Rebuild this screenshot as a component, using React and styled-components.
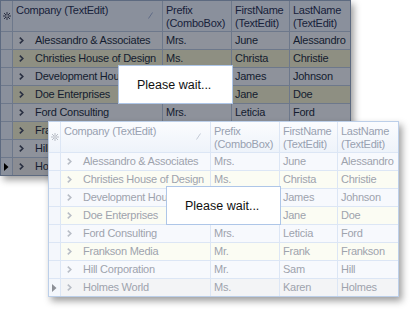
import React from "react";
import styled, { createGlobalStyle, css } from "styled-components";

const Global = createGlobalStyle`
  html, body { margin: 0; padding: 0; background: #ffffff; }
  * { box-sizing: border-box; }
`;

const themes = {
  dim: {
    header: "#8a909c",
    rowA: "#8e929b",
    rowB: "#8e8f82",
    focus: "#8b8d93",
    indicator: "#8a909c",
    line: "#6d788b",
    border: "#5d6a80",
    text: "#141c2f",
    headText: "#17213a",
    glyph: "#2a3042",
    sort: "#5f6b86",
    focusMark: "#000000",
  },
  light: {
    header: "linear-gradient(#fbfcfe, #eef3fa)",
    rowA: "#f7f9fd",
    rowB: "#fbfcf3",
    focus: "#f3f4f6",
    indicator: "#f4f7fc",
    line: "#dce6f5",
    border: "#bccfe9",
    text: "#9ea3ad",
    headText: "#98a1b1",
    glyph: "#b8bdc6",
    sort: "#c3cad6",
    focusMark: "#8d9097",
  },
};

const Page = styled.div`
  position: relative;
  width: 411px;
  height: 310px;
  overflow: hidden;
  background: #ffffff;
  font-family: "Liberation Sans", Arial, sans-serif;
`;

const GridBox = styled.div`
  position: relative;
  display: grid;
  grid-template-columns: 12px 150px 69px 58px 60px;
  width: 351px;
  border: 1px solid ${(p) => themes[p.$v].border};
  box-shadow: 3px 4px 7px rgba(0, 0, 0, 0.38);
  font-size: 11px;
  letter-spacing: -0.25px;
`;

const Floating = styled.div`
  position: absolute;
  left: 48px;
  top: 121px;
`;

const HeadCell = styled.div`
  height: 31px;
  background: ${(p) => themes[p.$v].header};
  color: ${(p) => themes[p.$v].headText};
  border-bottom: 1px solid ${(p) => themes[p.$v].line};
  border-right: ${(p) => (p.$end ? "none" : `1px solid ${themes[p.$v].line}`)};
  padding: 3px 0 0 3px;
  line-height: 13px;
  white-space: nowrap;
  overflow: hidden;
  display: flex;
  justify-content: space-between;
  align-items: flex-start;
  ${(p) =>
    p.$corner &&
    css`
      padding: 0;
      justify-content: center;
      align-items: center;
    `}
`;

const SortMark = styled.svg`
  margin: 8px 9px 0 0;
  flex: none;
`;

const Cell = styled.div`
  height: ${(p) => (p.$lastRow ? "17px" : "18px")};
  background: ${(p) => p.$bg};
  color: ${(p) => themes[p.$v].text};
  border-bottom: ${(p) => (p.$lastRow ? "none" : `1px solid ${themes[p.$v].line}`)};
  border-right: ${(p) => (p.$end ? "none" : `1px solid ${themes[p.$v].line}`)};
  padding-left: 3px;
  line-height: 17px;
  white-space: nowrap;
  overflow: hidden;
`;

const CompanyCell = styled(Cell)`
  display: flex;
  align-items: center;
  padding-left: 6px;
`;

const Chevron = styled.svg`
  flex: none;
  margin-right: 11px;
`;

const IndicatorCell = styled(Cell)`
  background: ${(p) => themes[p.$v].indicator};
  padding: 0 0 0 3px;
  display: flex;
  align-items: center;
`;

const Panel = styled.div`
  position: absolute;
  left: 117px;
  top: 64px;
  width: 115px;
  height: 39px;
  background: #ffffff;
  border: 1px solid #aec6e8;
  display: flex;
  align-items: center;
  padding-left: 18px;
  font-size: 12.5px;
  letter-spacing: 0;
  color: #111111;
`;

const rows = [
  ["Alessandro & Associates", "Mrs.", "June", "Alessandro"],
  ["Christies House of Design", "Ms.", "Christa", "Christie"],
  ["Development House", "Mr.", "James", "Johnson"],
  ["Doe Enterprises", "Ms.", "Jane", "Doe"],
  ["Ford Consulting", "Mrs.", "Leticia", "Ford"],
  ["Frankson Media", "Mr.", "Frank", "Frankson"],
  ["Hill Corporation", "Mr.", "Sam", "Hill"],
  ["Holmes World", "Ms.", "Karen", "Holmes"],
];

function Star({ color }) {
  return (
    <svg width="8" height="8" viewBox="0 0 8 8">
      <g stroke={color} strokeWidth="1" fill="none">
        <line x1="4" y1="0" x2="4" y2="8" />
        <line x1="0" y1="4" x2="8" y2="4" />
        <line x1="1" y1="1" x2="7" y2="7" />
        <line x1="7" y1="1" x2="1" y2="7" />
      </g>
      <rect x="3" y="3" width="2" height="2" fill="#ffffff" opacity="0.35" />
    </svg>
  );
}

function Grid({ v }) {
  const t = themes[v];
  const focusIndex = rows.length - 1;
  return (
    <GridBox $v={v}>
      <HeadCell $v={v} $corner>
        <Star color={t.glyph} />
      </HeadCell>
      <HeadCell $v={v}>
        <span>Company (TextEdit)</span>
        <SortMark width="5" height="7" viewBox="0 0 5 7">
          <line x1="0.5" y1="6.5" x2="4.5" y2="0.5" stroke={t.sort} strokeWidth="1" />
        </SortMark>
      </HeadCell>
      <HeadCell $v={v}>
        <span>
          Prefix
          <br />
          (ComboBox)
        </span>
      </HeadCell>
      <HeadCell $v={v}>
        <span>
          FirstName
          <br />
          (TextEdit)
        </span>
      </HeadCell>
      <HeadCell $v={v} $end>
        <span>
          LastName
          <br />
          (TextEdit)
        </span>
      </HeadCell>
      {rows.map((r, i) => {
        const bg = i === focusIndex ? t.focus : i % 2 === 0 ? t.rowA : t.rowB;
        const last = i === rows.length - 1;
        return (
          <React.Fragment key={r[0]}>
            <IndicatorCell $v={v} $bg={bg} $lastRow={last}>
              {i === focusIndex && (
                <svg width="5" height="8" viewBox="0 0 5 8">
                  <path d="M0 0 L4.5 4 L0 8 Z" fill={t.focusMark} />
                </svg>
              )}
            </IndicatorCell>
            <CompanyCell $v={v} $bg={bg} $lastRow={last}>
              <Chevron width="5" height="7" viewBox="0 0 5 7">
                <path d="M0.8 0.6 L3.8 3.5 L0.8 6.4" stroke={t.glyph} strokeWidth="1.6" fill="none" />
              </Chevron>
              {r[0]}
            </CompanyCell>
            <Cell $v={v} $bg={bg} $lastRow={last}>{r[1]}</Cell>
            <Cell $v={v} $bg={bg} $lastRow={last}>{r[2]}</Cell>
            <Cell $v={v} $bg={bg} $lastRow={last} $end>{r[3]}</Cell>
          </React.Fragment>
        );
      })}
      <Panel>Please wait...</Panel>
    </GridBox>
  );
}

export default function App() {
  return (
    <Page>
      <Global />
      <Grid v="dim" />
      <Floating>
        <Grid v="light" />
      </Floating>
    </Page>
  );
}
